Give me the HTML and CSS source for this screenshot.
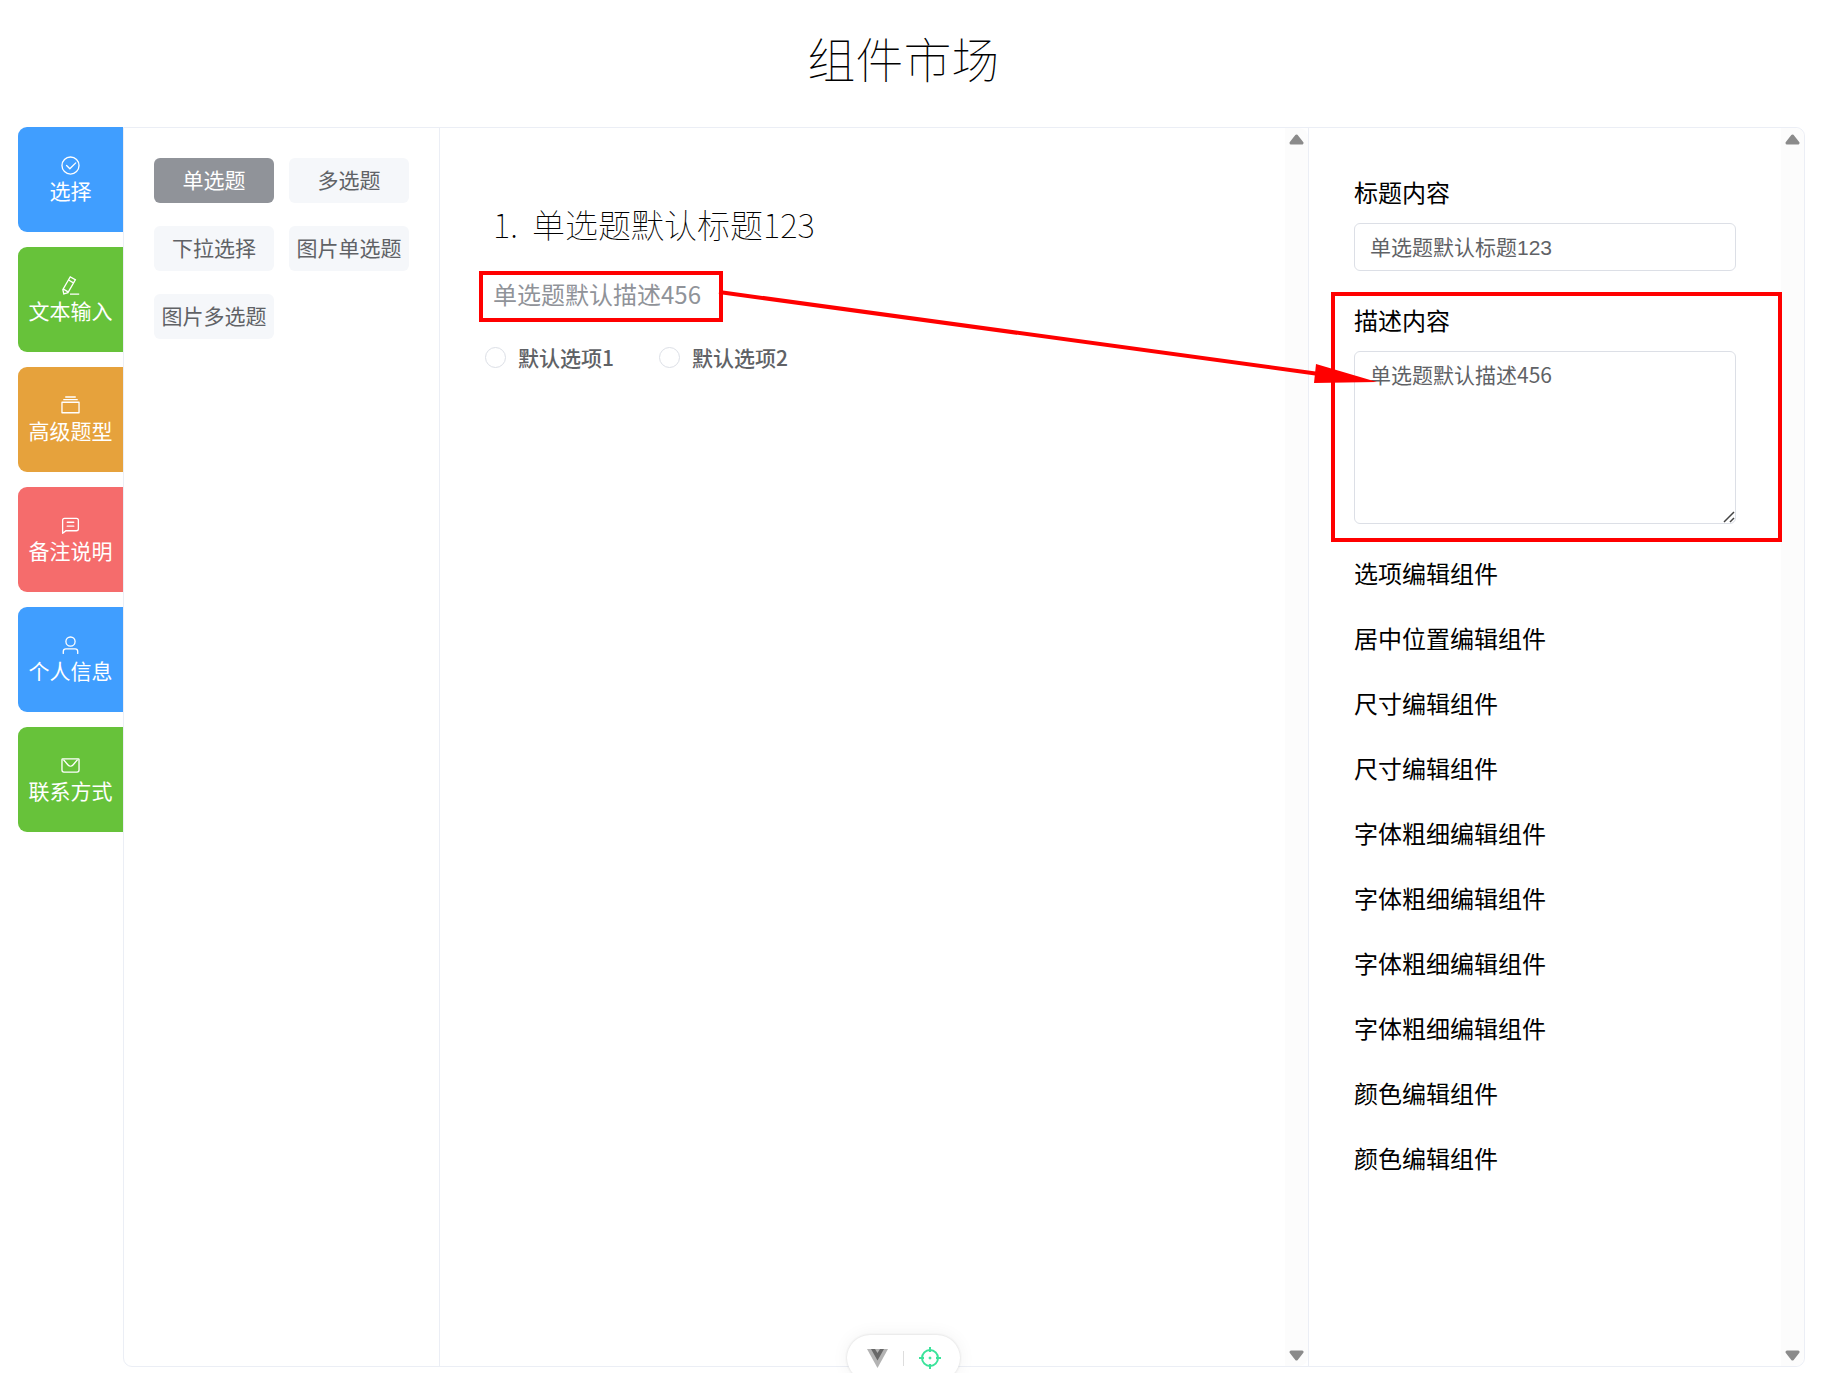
FILE: index.html
```html
<!doctype html>
<html lang="zh-CN">
<head>
<meta charset="utf-8">
<title>组件市场</title>
<link rel="stylesheet" href="styles.css">
</head>

<body>
<h1 class="page-title">组件市场</h1>
<div class="market">
	<!-- 左侧分类 -->
	<nav class="tabs">
		<a href="#" class="tab blue">
			<svg viewBox="0 0 1024 1024"><path d="M512 896a384 384 0 1 0 0-768 384 384 0 0 0 0 768m0 64a448 448 0 1 1 0-896 448 448 0 0 1 0 896"/><path d="M745.344 361.344a32 32 0 0 1 45.312 45.312l-288 288a32 32 0 0 1-45.312 0l-160-160a32 32 0 1 1 45.312-45.312L480 626.752z"/></svg>
			<span>选择</span>
		</a>
		<a href="#" class="tab green">
			<svg viewBox="0 0 1024 1024"><path d="m199.04 672.64 193.984 112 224-387.968-193.92-112-224 388.032zm-23.872 60.16 32.896 148.288 144.896-45.696zM455.04 229.248l193.92 112 56.704-98.112-193.984-112zM104.32 708.8l384-665.024 304.768 175.936L409.152 884.8h.064l-248.448 78.336zm384 254.272v-64h448v64z"/></svg>
			<span>文本输入</span>
		</a>
		<a href="#" class="tab orange">
			<svg viewBox="0 0 1024 1024"><path d="M128 384v448h768V384zm-32-64h832a32 32 0 0 1 32 32v512a32 32 0 0 1-32 32H96a32 32 0 0 1-32-32V352a32 32 0 0 1 32-32m64-128h704v64H160zm96-128h512v64H256z"/></svg>
			<span>高级题型</span>
		</a>
		<a href="#" class="tab red">
			<svg viewBox="0 0 1024 1024"><path d="M160 826.88 273.536 736H800a64 64 0 0 0 64-64V256a64 64 0 0 0-64-64H224a64 64 0 0 0-64 64zM296 800 147.968 918.4A32 32 0 0 1 96 893.44V256a128 128 0 0 1 128-128h576a128 128 0 0 1 128 128v416a128 128 0 0 1-128 128z"/><path d="M352 512h320q32 0 32 32t-32 32H352q-32 0-32-32t32-32m0-192h320q32 0 32 32t-32 32H352q-32 0-32-32t32-32"/></svg>
			<span>备注说明</span>
		</a>
		<a href="#" class="tab blue">
			<svg viewBox="0 0 1024 1024"><path d="M512 512a192 192 0 1 0 0-384 192 192 0 0 0 0 384m0 64a256 256 0 1 1 0-512 256 256 0 0 1 0 512m320 320v-96a96 96 0 0 0-96-96H288a96 96 0 0 0-96 96v96a32 32 0 1 1-64 0v-96a160 160 0 0 1 160-160h448a160 160 0 0 1 160 160v96a32 32 0 1 1-64 0"/></svg>
			<span>个人信息</span>
		</a>
		<a href="#" class="tab green">
			<svg viewBox="0 0 1024 1024"><path d="M128 224v512a64 64 0 0 0 64 64h640a64 64 0 0 0 64-64V224zm0-64h768a64 64 0 0 1 64 64v512a128 128 0 0 1-128 128H192A128 128 0 0 1 64 736V224a64 64 0 0 1 64-64"/><path d="M904 224 656.512 506.88a192 192 0 0 1-289.024 0L120 224zm-698.944 0 210.56 240.704a128 128 0 0 0 192.704 0L818.944 224z"/></svg>
			<span>联系方式</span>
		</a>
	</nav>

	<div class="panel">
		<!-- 题型按钮 -->
		<div class="types">
			<button type="button" class="type active">单选题</button>
			<button type="button" class="type">多选题</button>
			<button type="button" class="type">下拉选择</button>
			<button type="button" class="type">图片单选题</button>
			<button type="button" class="type">图片多选题</button>
		</div>

		<!-- 题目预览 -->
		<div class="preview">
			<div class="question">
				<h2 class="q-title"><span class="q-num">1.</span>单选题默认标题123</h2>
				<div class="q-desc">
					<p>单选题默认描述456</p>
					<svg class="arrow" viewBox="0 0 660 106"><path d="M0 11 600 93" fill="none" stroke="#f00" stroke-width="4"/><path d="M597 83 658 101 595 102z" fill="#f00"/></svg>
				</div>
				<div class="options">
					<label><input type="radio" name="opt">默认选项1</label>
					<label><input type="radio" name="opt">默认选项2</label>
				</div>
			</div>
			<div class="bar">
				<svg viewBox="0 0 15 11"><path d="M7.500 2 13 9H2z"/></svg>
				<svg viewBox="0 0 15 11"><path d="M7.500 9 13 2H2z"/></svg>
			</div>
		</div>

		<!-- 右侧编辑 -->
		<div class="edit">
			<div class="edit-list">
				<div class="item">
					<label for="t">标题内容</label>
					<input type="text" id="t" value="单选题默认标题123">
				</div>
				<div class="item mark">
					<label for="d">描述内容</label>
					<textarea id="d">单选题默认描述456</textarea>
					<svg class="grip" viewBox="0 0 12 12"><path d="M1 11 11 1M7 11l4-4" fill="none" stroke="#444" stroke-width="1.500"/></svg>
				</div>
				<div class="item">选项编辑组件</div>
				<div class="item">居中位置编辑组件</div>
				<div class="item">尺寸编辑组件</div>
				<div class="item">尺寸编辑组件</div>
				<div class="item">字体粗细编辑组件</div>
				<div class="item">字体粗细编辑组件</div>
				<div class="item">字体粗细编辑组件</div>
				<div class="item">字体粗细编辑组件</div>
				<div class="item">颜色编辑组件</div>
				<div class="item">颜色编辑组件</div>
			</div>
			<div class="bar">
				<svg viewBox="0 0 15 11"><path d="M7.500 2 13 9H2z"/></svg>
				<svg viewBox="0 0 15 11"><path d="M7.500 9 13 2H2z"/></svg>
			</div>
		</div>
	</div>
</div>

<!-- 底部工具条 -->
<div class="devtools">
	<button type="button" aria-label="Vue">
		<svg width="21" height="19" viewBox="0 0 21 19"><path d="M0 0h21L10.500 19z" fill="#b3b3b3"/><path d="M4 0h4l2.500 4L13 0h4l-6.500 11.500z" fill="#686868"/></svg>
	</button>
	<i></i>
	<button type="button" aria-label="Inspect">
		<svg width="22" height="22" viewBox="0 0 22 22" fill="none" stroke="#3be39b" stroke-width="2"><circle cx="11" cy="11" r="8"/><path d="M11 0v5M11 17v5M0 11h5M17 11h5"/><circle cx="11" cy="11" r="1" fill="#3be39b" stroke-width="1"/></svg>
	</button>
</div>
</body>
</html>
```
FILE: styles.css
```css
*{margin:0;padding:0;box-sizing:border-box}
body{background:#fff;color:#000;font:24px/32px "Noto Sans CJK SC",sans-serif;}
button,input,textarea{font-family:inherit;}
.page-title{height:127px;padding:22px 18px 0 0;line-height:70px;font-size:48px;font-weight:100;text-align:center;}
.market{display:flex;height:calc(100vh - 133px);min-height:1100px;margin:0 20px 0 18px;}

.tabs{display:flex;flex-direction:column;gap:15px;width:105px;flex:none;}
.tab{display:flex;flex-direction:column;align-items:center;justify-content:center;height:105px;border-radius:9px 0 0 9px;color:#fff;font-size:21px;line-height:29px;text-decoration:none;}
.tab svg{width:21px;height:21px;fill:#fff;}
.blue{background:#409eff;}
.green{background:#67c23a;}
.orange{background:#e6a23c;}
.red{background:#f56c6c;}

.panel{display:flex;flex:1;min-width:0;border:1px solid #ebeef5;border-radius:0 9px 9px 9px;}
.types{display:grid;grid-template-columns:120px 120px;grid-auto-rows:45px;align-content:start;gap:23px 15px;width:315px;padding:30px;flex:none;}
.type{padding-bottom:3px;border:0;border-radius:6px;background:#f5f7fa;color:#606266;font-size:21px;white-space:nowrap;}
.type.active{background:#909399;color:#fff;}

.preview{display:flex;flex:1;min-width:0;border:1px solid #ebeef5;border-width:0 1px;}
.question{flex:1;padding:72px 45px 0;}
.q-title{padding-left:8px;line-height:48px;font-size:33px;font-weight:100;}
.q-num{display:inline-block;width:39px;}
/* 红框和箭头 */
.q-desc{position:relative;width:244px;height:51px;margin:23px 0 19px -6px;padding:3px 10px;border:4px solid #f00;color:#909399;}
.arrow{position:absolute;left:236px;top:6px;width:660px;height:106px;overflow:visible;z-index:2;}
.options{display:flex;gap:45px;}
.options label{display:flex;align-items:center;color:#606266;font-size:21px;font-weight:500;white-space:nowrap;}
.options input{appearance:none;width:21px;height:21px;margin-right:12px;border:1px solid #dcdfe6;border-radius:50%;background:#fff;}

.edit{display:flex;width:495px;flex:none;}
.edit-list{flex:1;padding:47px 45px 0;line-height:33px;}
.item{margin-bottom:32px;}
.item label{display:block;margin-bottom:15px;}
.item input,.item textarea{display:block;width:100%;border:1px solid #dcdfe6;border-radius:6px;color:#606266;font-size:21px;outline:0;}
.item input{height:48px;padding:0 15px 2px;font-family:"Liberation Sans","Noto Sans CJK SC",sans-serif;}
.item textarea{height:173px;padding:6px 15px;line-height:32px;resize:none;}
.mark{position:relative;}
.mark:after{content:"";position:absolute;left:-23px;right:-46px;top:-11px;bottom:-18px;border:4px solid #f00;pointer-events:none;}
.grip{position:absolute;right:1px;bottom:1px;width:12px;height:12px;}

.bar{display:flex;flex-direction:column;justify-content:space-between;align-items:center;width:23px;padding:6px 0 5px;flex:none;background:#fcfcfc;border-radius:0 9px 9px 0;}
.bar svg{width:15px;height:11px;fill:#8b8b8b;stroke:#8b8b8b;stroke-width:3;stroke-linejoin:round;}

.devtools{position:fixed;left:calc(50% - 66px);bottom:-8px;display:flex;align-items:center;justify-content:space-between;width:113px;height:46px;padding:0 19px 0 20px;border-radius:23px;background:#fff;box-shadow:0 0 3px rgba(0,0,0,.15),0 0 18px rgba(0,0,0,.06);}
.devtools button{display:flex;border:0;background:none;}
.devtools i{width:1px;height:15px;background:#ddd;}
```
